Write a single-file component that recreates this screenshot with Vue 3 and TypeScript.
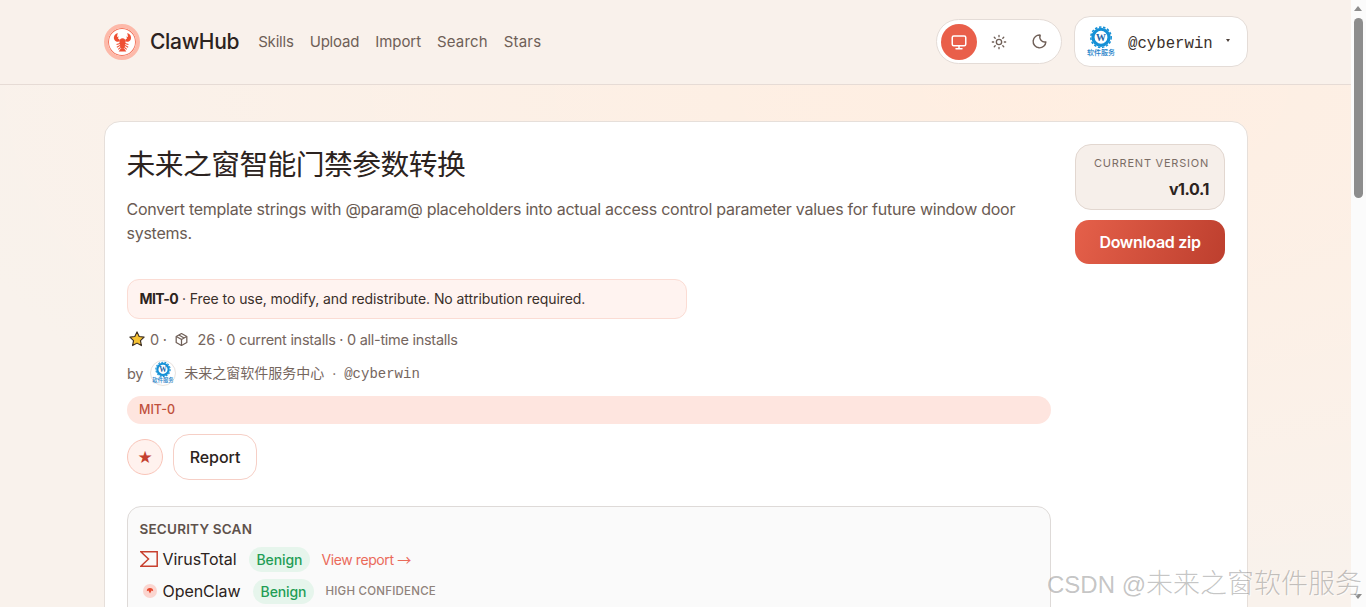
<script setup lang="ts">
const nav: string[] = ['Skills', 'Upload', 'Import', 'Search', 'Stars']
</script>

<template>
  <div class="screen">
    <div class="page">
      <header class="topbar">
        <div class="topbar-inner">
          <a class="brand">
            <span class="brand-mark">
              <svg viewBox="0 0 24 24" fill="#ee4f33">
                <ellipse cx="12" cy="11.500" rx="3.200" ry="4" />
                <ellipse cx="12" cy="15.500" rx="2.600" ry="3" />
                <path d="M10.400 18h3.200l2.400 3.500H8z" />
                <path d="M7 2c-3 .8-4.800 3.800-3.600 6.800 1 2.200 3.700 3.100 5.900 2L8.800 8.500 7.400 8 7.800 5.500 6.200 6.500z" />
                <path d="M17 2c3 .8 4.800 3.800 3.600 6.800-1 2.200-3.700 3.100-5.900 2l.5-2.300 1.400-.5-.4-2.500 1.600 1z" />
                <path d="M9.500 13 5.800 14.200M9.500 15l-3.400 2M10 17l-2.400 2.200M14.500 13l3.700 1.200M14.500 15l3.400 2M14 17l2.400 2.200" stroke="#ee4f33" stroke-width="1.100" fill="none" />
              </svg>
            </span>
            <span class="brand-name">ClawHub</span>
          </a>
          <nav class="nav">
            <a v-for="item in nav" :key="item" class="nav-link">{{ item }}</a>
          </nav>
          <div class="top-actions">
            <div class="theme">
              <span class="theme-btn active">
                <svg viewBox="0 0 24 24" width="18" height="18" fill="none" stroke="#fff" stroke-width="2" stroke-linecap="round" stroke-linejoin="round">
                  <rect x="3" y="4" width="18" height="13" rx="2" /><path d="M8 21h8M12 17v4" />
                </svg>
              </span>
              <span class="theme-btn">
                <svg viewBox="0 0 24 24" width="16" height="16" fill="none" stroke="#6f5f57" stroke-width="2" stroke-linecap="round">
                  <circle cx="12" cy="12" r="4" /><path d="M12 2v2M12 20v2M4.900 4.900l1.400 1.400M17.700 17.700l1.400 1.400M2 12h2M20 12h2M4.900 19.100l1.400-1.400M17.700 6.300l1.400-1.400" />
                </svg>
              </span>
              <span class="theme-btn">
                <svg class="moon" viewBox="0 0 24 24" width="17" height="17" fill="none" stroke="#6f5f57" stroke-width="2" stroke-linecap="round" stroke-linejoin="round">
                  <path d="M13 3a7 7 0 0 0 8 9.500A9 9 0 1 1 13 3z" />
                </svg>
              </span>
            </div>
            <div class="user">
              <svg class="avatar-lg" viewBox="0 0 36 36">
                <circle cx="18" cy="18" r="18" fill="#fff" />
                <circle cx="18" cy="13" r="8.500" fill="#fff" stroke="#1590d6" stroke-width="3.400" />
                <circle cx="18" cy="13" r="10.800" fill="none" stroke="#1590d6" stroke-width="1.600" stroke-dasharray="2.600 1.800" />
                <text x="18" y="16.500" text-anchor="middle" class="logo-w">W</text>
                <text x="18" y="32" text-anchor="middle" class="logo-cn">软件服务</text>
              </svg>
              <span class="handle">@cyberwin</span>
              <span class="caret"></span>
            </div>
          </div>
        </div>
      </header>

      <main class="body">
        <section class="card">
          <div class="head">
            <div class="head-text">
              <h1 class="title">未来之窗智能门禁参数转换</h1>
              <p class="desc">Convert template strings with @param@ placeholders into actual access control parameter values for future window door systems.</p>
            </div>
            <aside class="side">
              <div class="version">
                <span class="version-label">CURRENT VERSION</span>
                <strong class="version-num">v1.0.1</strong>
              </div>
              <a class="download">Download zip</a>
            </aside>
          </div>

          <div class="content">
            <div class="license"><b>MIT-0</b> · Free to use, modify, and redistribute. No attribution required.</div>

            <div class="stats">
              <svg viewBox="0 0 24 24" width="18" height="18">
                <path d="M12 2.500l2.900 6.200 6.600.8-4.900 4.600 1.300 6.700L12 17.500l-5.900 3.300 1.300-6.700-4.900-4.600 6.600-.8z" fill="#f6c234" stroke="#3a2c20" stroke-width="1.500" stroke-linejoin="round" />
              </svg>
              <span class="stat-a">0 ·</span>
              <svg class="box" viewBox="0 0 24 24" width="15" height="15" fill="none" stroke="#6f5f57" stroke-width="2" stroke-linejoin="round">
                <path d="M12 2.500l8.500 4.700v9.600L12 21.500l-8.500-4.700V7.200z" /><path d="M3.800 7.300 12 12l8.200-4.700M12 12v9.500M7.800 4.900l8.300 4.800" />
              </svg>
              <span>26 · 0 current installs · 0 all-time installs</span>
            </div>

            <div class="byline">
              <span class="by">by</span>
              <svg class="avatar-sm" viewBox="0 0 36 36">
                <circle cx="18" cy="18" r="17.300" fill="#fff" stroke="#e3dcd8" stroke-width="1.200" />
                <circle cx="18" cy="13" r="7.800" fill="#fff" stroke="#1590d6" stroke-width="3" />
                <circle cx="18" cy="13" r="9.900" fill="none" stroke="#1590d6" stroke-width="1.500" stroke-dasharray="2.600 1.800" />
                <text x="18" y="16.500" text-anchor="middle" class="logo-w">W</text>
                <text x="18" y="31" text-anchor="middle" class="logo-cn">软件服务</text>
              </svg>
              <span class="owner">未来之窗软件服务中心</span>
              <span class="dot">·</span>
              <span class="owner-handle">@cyberwin</span>
            </div>

            <div class="tag">MIT-0</div>

            <div class="actions">
              <button class="star-btn">★</button>
              <button class="report">Report</button>
            </div>

            <div class="scan">
              <div class="scan-title">SECURITY SCAN</div>
              <div class="scan-row">
                <svg class="vt" viewBox="0 0 18 16" width="18" height="16" fill="none" stroke="#c8402f" stroke-width="1.500">
                  <path d="M.8 .8h16.400v14.400H.8L8.500 8z" />
                </svg>
                <span class="scan-name">VirusTotal</span>
                <span class="benign">Benign</span>
                <a class="report-link">View report <span class="long-arrow">→</span></a>
              </div>
              <div class="scan-row">
                <svg class="oc" viewBox="0 0 16 16" width="16" height="16">
                  <circle cx="8" cy="8" r="7" fill="#fbd5cf" />
                  <path d="M4.800 8.200a3.200 3.200 0 0 1 6.400 0L9.600 7.400 8 10.500 6.400 7.400z" fill="#e8492f" />
                </svg>
                <span class="scan-name">OpenClaw</span>
                <span class="benign">Benign</span>
                <span class="confidence">HIGH CONFIDENCE</span>
              </div>
            </div>
          </div>
        </section>
      </main>
    </div>

    <div class="scrollbar">
      <span class="arrow up"></span>
      <span class="thumb"></span>
      <span class="arrow down"></span>
    </div>

    <div class="watermark">CSDN @<span class="wm-cn">未来之窗软件服务</span></div>
  </div>
</template>

<style>
html, body { margin: 0; height: 100%; overflow: hidden; }
</style>

<style scoped>
.screen {
  position: relative;
  display: flex;
  height: 607px;
  overflow: hidden;
  font-family: Inter, "Noto Sans CJK SC", sans-serif;
  color: #2c2320;
}
.page {
  width: 1351px;
  flex: none;
  display: flex;
  flex-direction: column;
  background: radial-gradient(ellipse 1100px 520px at 75% 85px, #ffeee1 0%, rgba(255, 238, 225, 0) 100%), #f9f2ec;
}
.topbar {
  height: 84px;
  flex: none;
  box-sizing: content-box;
  border-bottom: 1px solid #e6dbd5;
  background: #f9f1eb;
}
.topbar-inner {
  height: 100%;
  margin-left: 104px;
  width: 1144px;
  display: flex;
  align-items: center;
}
.brand { display: flex; align-items: center; gap: 10px; }
.brand-mark {
  width: 36px;
  height: 36px;
  box-sizing: border-box;
  border-radius: 50%;
  border: 4px solid #fdb9a9;
  background: #fff;
  box-shadow: inset 0 0 0 1px #f3745c;
  display: flex;
  align-items: center;
  justify-content: center;
}
.brand-mark svg { width: 23px; height: 23px; }
.brand-name { font-size: 21px; font-weight: 500; letter-spacing: -0.3px; color: #2c2320; margin-bottom: 2px; }
.nav { display: flex; gap: 16px; margin-left: 19px; margin-bottom: 2px; }
.nav-link { font-size: 15px; letter-spacing: -0.2px; color: #6f5f57; }
.nav-link:nth-child(3) { letter-spacing: -0.05px; }
.nav-link:nth-child(4) { letter-spacing: 0.15px; }
.nav-link:nth-child(5) { letter-spacing: 0.2px; }
.top-actions { margin-left: auto; margin-bottom: 1px; display: flex; align-items: center; gap: 12px; }
.theme {
  height: 45px;
  box-sizing: border-box;
  width: 126px;
  padding: 0 4px;
  border: 1px solid #e4dcd7;
  border-radius: 23px;
  background: #fff;
  display: flex;
  align-items: center;
  gap: 4px;
}
.theme-btn {
  width: 36px;
  height: 36px;
  border-radius: 50%;
  display: flex;
  align-items: center;
  justify-content: center;
}
.theme-btn.active { background: #e95f4a; }
.moon { margin-left: 1px; }
.user {
  width: 174px;
  height: 51px;
  box-sizing: border-box;
  padding-left: 9px;
  border: 1px solid #e4dcd7;
  border-radius: 16px;
  background: #fff;
  display: flex;
  align-items: center;
}
.avatar-lg { width: 34px; height: 34px; }
.avatar-sm { width: 26px; height: 26px; }
.logo-w { font-family: "Liberation Serif", serif; font-size: 10.500px; font-weight: 700; fill: #2766a8; }
.logo-cn { font-family: "Noto Sans CJK SC", sans-serif; font-size: 7.400px; font-weight: 500; fill: #1a80c8; }
.handle { margin: 5px 0 0 10px; font-family: "Liberation Mono", monospace; font-size: 15.700px; color: #3a2f2a; }
.caret {
  margin: 0 0 2px 13px;
  border-left: 2.500px solid transparent;
  border-right: 2.500px solid transparent;
  border-top: 3px solid #4c403a;
}
.body { flex: 1; padding: 36px 0 0 104px; min-height: 0; }
.card {
  width: 1144px;
  box-sizing: border-box;
  padding: 22px 22px 40px;
  background: #fff;
  border: 1px solid #e6dfda;
  border-radius: 16px;
}
.head { display: flex; gap: 24px; align-items: flex-start; }
.head-text { flex: 1; min-width: 0; }
.title {
  margin: 0 0 0 -0.500px;
  font-size: 28.800px;
  font-weight: 400;
  letter-spacing: -0.02em;
  line-height: 42px;
  color: #2c2320;
}
.desc { margin: 11px 0 0 -0.500px; font-size: 16px; letter-spacing: -0.26px; line-height: 24px; color: #6a5b53; }
.side { width: 150px; flex: none; display: flex; flex-direction: column; gap: 10px; }
.version {
  height: 66px;
  box-sizing: border-box;
  padding: 11px 15px 0 0;
  border: 1px solid #e2d7d0;
  border-radius: 16px;
  background: #f6efea;
  display: flex;
  flex-direction: column;
  align-items: flex-end;
}
.version-label { font-size: 11px; line-height: 14px; letter-spacing: 0.07em; color: #7b6d65; }
.version-num { margin-top: 9px; font-size: 16px; letter-spacing: -0.4px; line-height: 20px; font-weight: 700; color: #2c2320; }
.download {
  height: 44px;
  border-radius: 14px;
  background: linear-gradient(110deg, #e5604a, #bd3f2e);
  color: #fff;
  font-size: 16px;
  font-weight: 600;
  letter-spacing: -0.3px;
  display: flex;
  align-items: center;
  justify-content: center;
}
.content { width: 924px; }
.license {
  width: 560px;
  height: 40px;
  box-sizing: border-box;
  margin-top: 15px;
  padding: 0 11.500px;
  border: 1px solid #fbdcd4;
  border-radius: 12px;
  background: #fff3f0;
  font-size: 14px;
  letter-spacing: -0.07px;
  line-height: 38px;
  color: #3a2f2a;
}
.license b { font-weight: 700; color: #2c2320; letter-spacing: -0.6px; }
.stats {
  margin-top: 10px;
  height: 20px;
  display: flex;
  align-items: center;
  font-size: 14.500px;
  letter-spacing: -0.28px;
  color: #75665e;
}
.stats > svg:first-child { margin-left: 1px; }
.stat-a { margin-left: 4px; }
.box { margin: 0 9px 0 7px; }
.byline {
  margin-top: 10px;
  height: 28px;
  display: flex;
  align-items: center;
  font-size: 14px;
  color: #75665e;
}
.by { font-size: 14.500px; margin-right: 7px; letter-spacing: -0.3px; }
.owner { margin-left: 8px; font-size: 14px; margin-top: -2px; }
.dot { margin: 0 8px; }
.owner-handle { font-family: "Liberation Mono", monospace; font-size: 14px; margin-top: 2px; }
.tag {
  margin-top: 9px;
  height: 28px;
  padding-left: 12px;
  border-radius: 14px;
  background: #fee5df;
  color: #c0503c;
  font-size: 12.500px;
  font-weight: 500;
  line-height: 28px;
}
.actions { margin-top: 10px; display: flex; align-items: center; gap: 10px; }
.star-btn {
  width: 36px;
  height: 36px;
  padding: 0;
  border-radius: 50%;
  border: 1px solid #f9c5b9;
  background: #fff2ee;
  color: #c4402f;
  font-size: 17px;
  font-family: "DejaVu Sans", sans-serif;
}
.report {
  width: 84px;
  height: 46px;
  padding: 0;
  border: 1px solid #f6cfc6;
  border-radius: 16px;
  background: #fff;
  color: #2c2320;
  font-family: inherit;
  font-size: 16px;
  font-weight: 500;
  letter-spacing: -0.05px;
}
.scan {
  margin-top: 26px;
  box-sizing: border-box;
  height: 140px;
  padding: 13px 11.500px;
  border: 1px solid #dedad8;
  border-radius: 14px;
  background: #fafafa;
}
.scan-title {
  font-size: 13.500px;
  line-height: 18px;
  font-weight: 600;
  letter-spacing: 0.015em;
  color: #5f524c;
}
.scan-row { height: 32px; display: flex; align-items: center; }
.scan-title + .scan-row { margin-top: 5px; }
.vt { margin-right: 5px; }
.oc { margin: 0 5px 0 2px; }
.scan-name { font-size: 16px; letter-spacing: -0.05px; color: #2c2320; margin-right: 12px; }
.benign {
  height: 25px;
  padding: 0 8px;
  border-radius: 13px;
  background: #e6f5ec;
  color: #1f9d55;
  font-size: 14px;
  letter-spacing: -0.1px;
  font-weight: 500;
  line-height: 25px;
}
.report-link { margin-left: 11px; font-size: 14px; letter-spacing: -0.4px; color: #ea6a5a; white-space: nowrap; }
.long-arrow { font-family: "Noto Sans CJK SC", sans-serif; font-size: 14px; display: inline-block; letter-spacing: 0; }
.confidence { margin-left: 11px; font-size: 11.500px; font-weight: 500; letter-spacing: 0.02em; color: #8f827b; }
.scrollbar {
  flex: 1;
  background: #fbfbfb;
  position: relative;
}
.thumb {
  position: absolute;
  left: 3px;
  top: 18px;
  width: 9px;
  height: 180px;
  border-radius: 5px;
  background: #8d8d8d;
}
.arrow {
  position: absolute;
  left: 3px;
  border-left: 4.500px solid transparent;
  border-right: 4.500px solid transparent;
}
.arrow.up { top: 6px; border-bottom: 5px solid #8d8d8d; }
.arrow.down { bottom: 8px; border-top: 5px solid #8d8d8d; }
.watermark {
  position: absolute;
  left: 1047px;
  top: 567px;
  font-family: "Liberation Sans", "Noto Sans CJK SC", sans-serif;
  font-size: 24px;
  line-height: 34px;
  white-space: nowrap;
  color: rgba(90, 90, 90, 0.36);
  text-shadow: 1px 1px 1px rgba(255, 255, 255, 0.7);
}
.wm-cn { font-size: 27px; font-weight: 300; }
</style>
